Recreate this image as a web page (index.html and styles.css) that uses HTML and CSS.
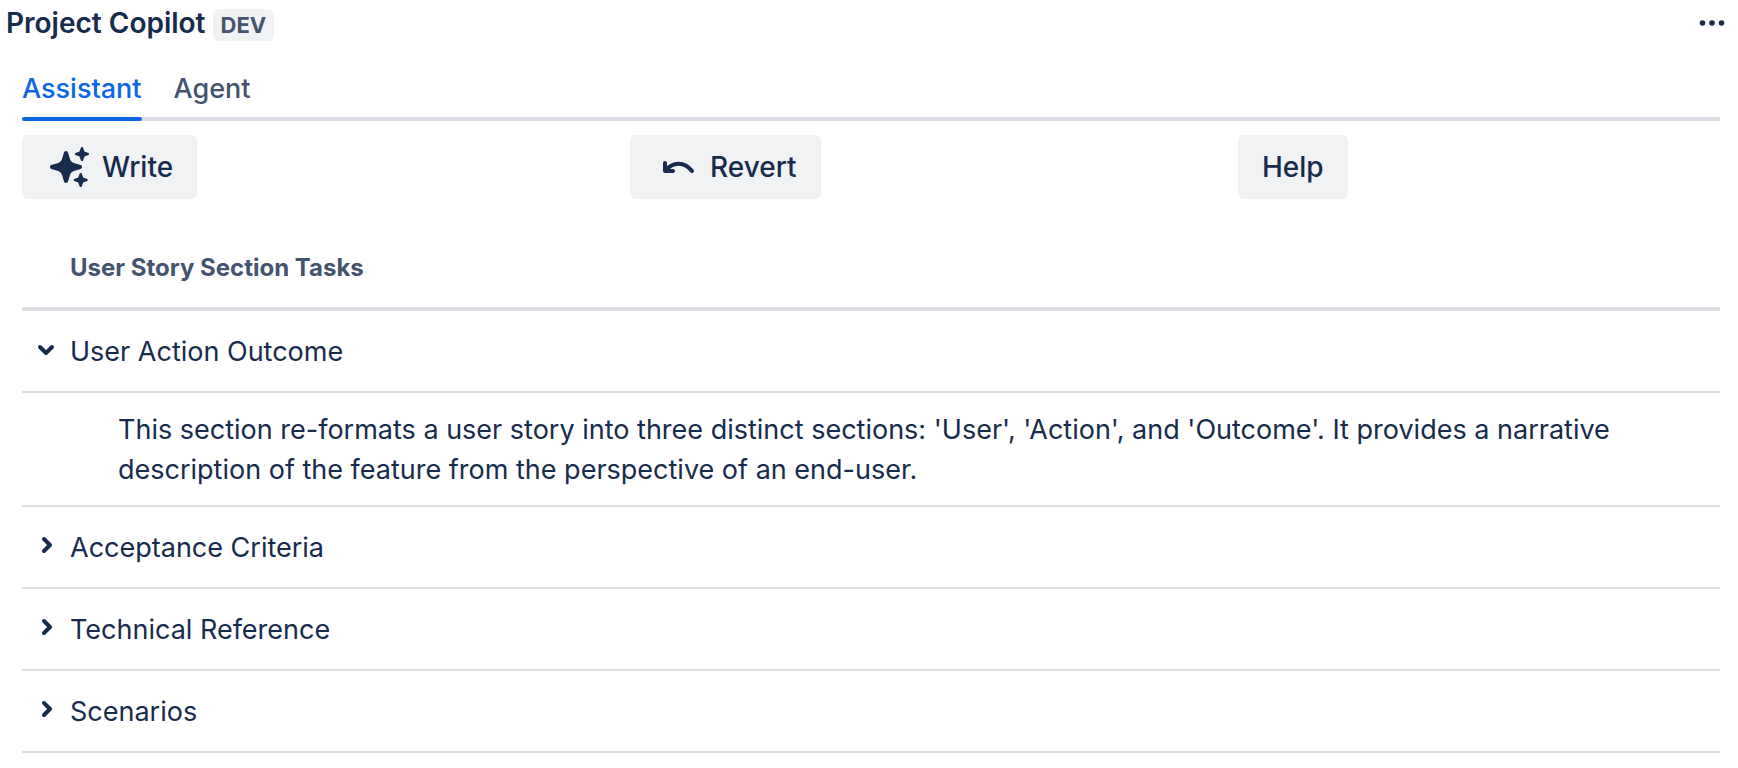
FILE: index.html
```html
<!DOCTYPE html>
<html lang="en">

<head>
    <meta charset="UTF-8">
    <meta name="viewport" content="width=device-width, initial-scale=1.0">
    <title>Project Copilot</title>
    <link rel="stylesheet" href="styles.css">
</head>

<body>
    <header class="panel-header">
        <h1>Project Copilot</h1>
        <span class="badge">DEV</span>
        <button class="more" aria-label="More actions">
            <svg width="32" height="32" viewBox="0 0 32 32">
                <circle cx="6.5" cy="16" r="2.8" />
                <circle cx="16" cy="16" r="2.8" />
                <circle cx="25.5" cy="16" r="2.8" />
            </svg>
        </button>
    </header>

    <main class="panel">
        <!-- Tabs -->
        <div class="tabs" role="tablist">
            <button class="tab active" role="tab" aria-selected="true">Assistant</button>
            <button class="tab" role="tab" aria-selected="false">Agent</button>
        </div>

        <!-- Actions -->
        <div class="actions">
            <button class="btn">
                <svg class="icon" width="48" height="48" viewBox="0 0 48 48">
                    <path d="M24 8c1.2 0 1.8.7 2.200 2l1.600 5.500c.8 2.600 2.100 3.900 4.700 4.700L38 21.800c1.300.4 2 1 2 2.200s-.7 1.800-2 2.200l-5.500 1.600c-2.600.8-3.900 2.100-4.700 4.700L26.200 38c-.4 1.300-1 2-2.200 2s-1.800-.7-2.200-2l-1.600-5.500c-.8-2.600-2.100-3.900-4.700-4.700L10 26.200c-1.300-.4-2-1-2-2.200s.7-1.800 2-2.200l5.500-1.600c2.600-.8 3.900-2.100 4.700-4.700L21.800 10c.4-1.300 1-2 2.200-2z" />
                    <path d="M40 4c.7 0 1 .4 1.200 1l.9 2.600c.3.8.6 1.100 1.400 1.400l2.500.8c.7.2 1 .5 1 1.200s-.3 1-1 1.200l-2.500.8c-.8.3-1.100.6-1.400 1.400L41.200 17c-.2.6-.5 1-1.200 1s-1-.4-1.200-1l-.9-2.600c-.3-.8-.6-1.100-1.400-1.400l-2.500-.8c-.7-.2-1-.5-1-1.200s.3-1 1-1.200l2.500-.8c.8-.3 1.100-.6 1.400-1.400L38.800 5c.2-.6.5-1 1.200-1z" />
                    <path transform="translate(-1.3 26)" d="M40 4c.7 0 1 .4 1.200 1l.9 2.600c.3.8.6 1.100 1.400 1.400l2.500.8c.7.2 1 .5 1 1.200s-.3 1-1 1.200l-2.500.8c-.8.3-1.100.6-1.400 1.400L41.200 17c-.2.6-.5 1-1.200 1s-1-.4-1.200-1l-.9-2.600c-.3-.8-.6-1.100-1.400-1.400l-2.500-.8c-.7-.2-1-.5-1-1.200s.3-1 1-1.200l2.500-.8c.8-.3 1.100-.6 1.400-1.400L38.800 5c.2-.6.5-1 1.200-1z" />
                </svg>
                Write
            </button>
            <button class="btn">
                <svg class="icon line" width="48" height="48" viewBox="0 0 48 48">
                    <path d="M15 20v8h8" />
                    <path d="M15.5 27.5c7-9 19-9.5 26.5.5" />
                </svg>
                Revert
            </button>
            <button class="btn">Help</button>
        </div>

        <!-- Tasks -->
        <table class="tasks">
            <thead>
                <tr>
                    <th>User Story Section Tasks</th>
                </tr>
            </thead>
            <tbody>
                <tr>
                    <td>
                        <button class="toggle" aria-expanded="true">
                            <svg class="chevron" width="48" height="40" viewBox="0 0 48 40"><path d="M18 15l6 6 6-6" /></svg>
                            User Action Outcome
                        </button>
                    </td>
                </tr>
                <tr>
                    <td class="detail">This section re-formats a user story into three distinct sections: 'User', 'Action', and 'Outcome'. It provides a narrative description of the feature from the perspective of an end-user.</td>
                </tr>
                <tr>
                    <td>
                        <button class="toggle" aria-expanded="false">
                            <svg class="chevron" width="48" height="40" viewBox="0 0 48 40"><path d="M22 11l6 6-6 6" /></svg>
                            Acceptance Criteria
                        </button>
                    </td>
                </tr>
                <tr>
                    <td>
                        <button class="toggle" aria-expanded="false">
                            <svg class="chevron" width="48" height="40" viewBox="0 0 48 40"><path d="M22 11l6 6-6 6" /></svg>
                            Technical Reference
                        </button>
                    </td>
                </tr>
                <tr>
                    <td>
                        <button class="toggle" aria-expanded="false">
                            <svg class="chevron" width="48" height="40" viewBox="0 0 48 40"><path d="M22 11l6 6-6 6" /></svg>
                            Scenarios
                        </button>
                    </td>
                </tr>
            </tbody>
        </table>
    </main>
</body>

</html>
```
FILE: styles.css
```css
body {
    margin: 0;
    background: #fff;
    color: #172b4d;
    font-family: Inter, "Liberation Sans", sans-serif;
    font-size: 27px;
    line-height: 40px;
}

button {
    border: none;
    padding: 0;
    background: none;
    color: inherit;
    font: inherit;
    cursor: pointer;
}

/* Header */
.panel-header {
    display: flex;
    align-items: center;
    gap: 7px;
    padding: 3px 10px 0 6px;
}

h1 {
    margin: 0;
    font-size: 28px;
    font-weight: 600;
}

.badge {
    margin-top: 4px;
    padding: 0 8px;
    border-radius: 6px;
    background: #f1f2f4;
    color: #44546f;
    font-size: 22px;
    font-weight: 700;
    line-height: 32px;
}

.more {
    display: flex;
    margin-left: auto;
    fill: #172b4d;
}

.panel {
    padding: 20px 18px 0 22px;
}

/* Tabs */
.tabs {
    display: flex;
    gap: 32px;
    border-bottom: 4px solid #dcdfe4;
}

.tab {
    padding-top: 6px;
    margin-bottom: -4px;
    color: #44546f;
    font-weight: 500;
}

.tab::after {
    content: "";
    display: block;
    height: 4px;
    margin-top: 8px;
    border-radius: 2px;
}

.tab.active {
    color: #0c66e4;
}

.tab.active::after {
    background: #0c66e4;
}

/* Actions */
.actions {
    display: grid;
    grid-template-columns: repeat(3, 1fr);
    column-gap: 126px;
    justify-items: start;
    margin-top: 14px;
}

.btn {
    display: flex;
    align-items: center;
    gap: 12px;
    padding: 12px 24px;
    border-radius: 6px;
    background: #f1f2f4;
    font-size: 28px;
    font-weight: 500;
}

.icon {
    margin: -4px 0 -4px -4px;
    fill: #172b4d;
}

.line {
    fill: none;
    stroke: #172b4d;
    stroke-width: 4;
    stroke-linecap: round;
    stroke-linejoin: round;
}

/* Tasks */
.tasks {
    width: 100%;
    margin-top: 32px;
    border-collapse: separate;
    border-spacing: 0;
}

th {
    padding: 15px 48px 17px;
    border-bottom: 4px solid #dcdfe4;
    color: #44546f;
    font-size: 24px;
    font-weight: 700;
    line-height: 44px;
    text-align: left;
}

td {
    padding: 21px 0 19px;
    border-bottom: 2px solid #dcdfe4;
}

.toggle {
    display: flex;
    align-items: center;
}

.chevron {
    fill: none;
    stroke: #172b4d;
    stroke-width: 4;
    stroke-linecap: round;
    stroke-linejoin: round;
}

.detail {
    padding: 17px 48px 15px 96px;
}
```
